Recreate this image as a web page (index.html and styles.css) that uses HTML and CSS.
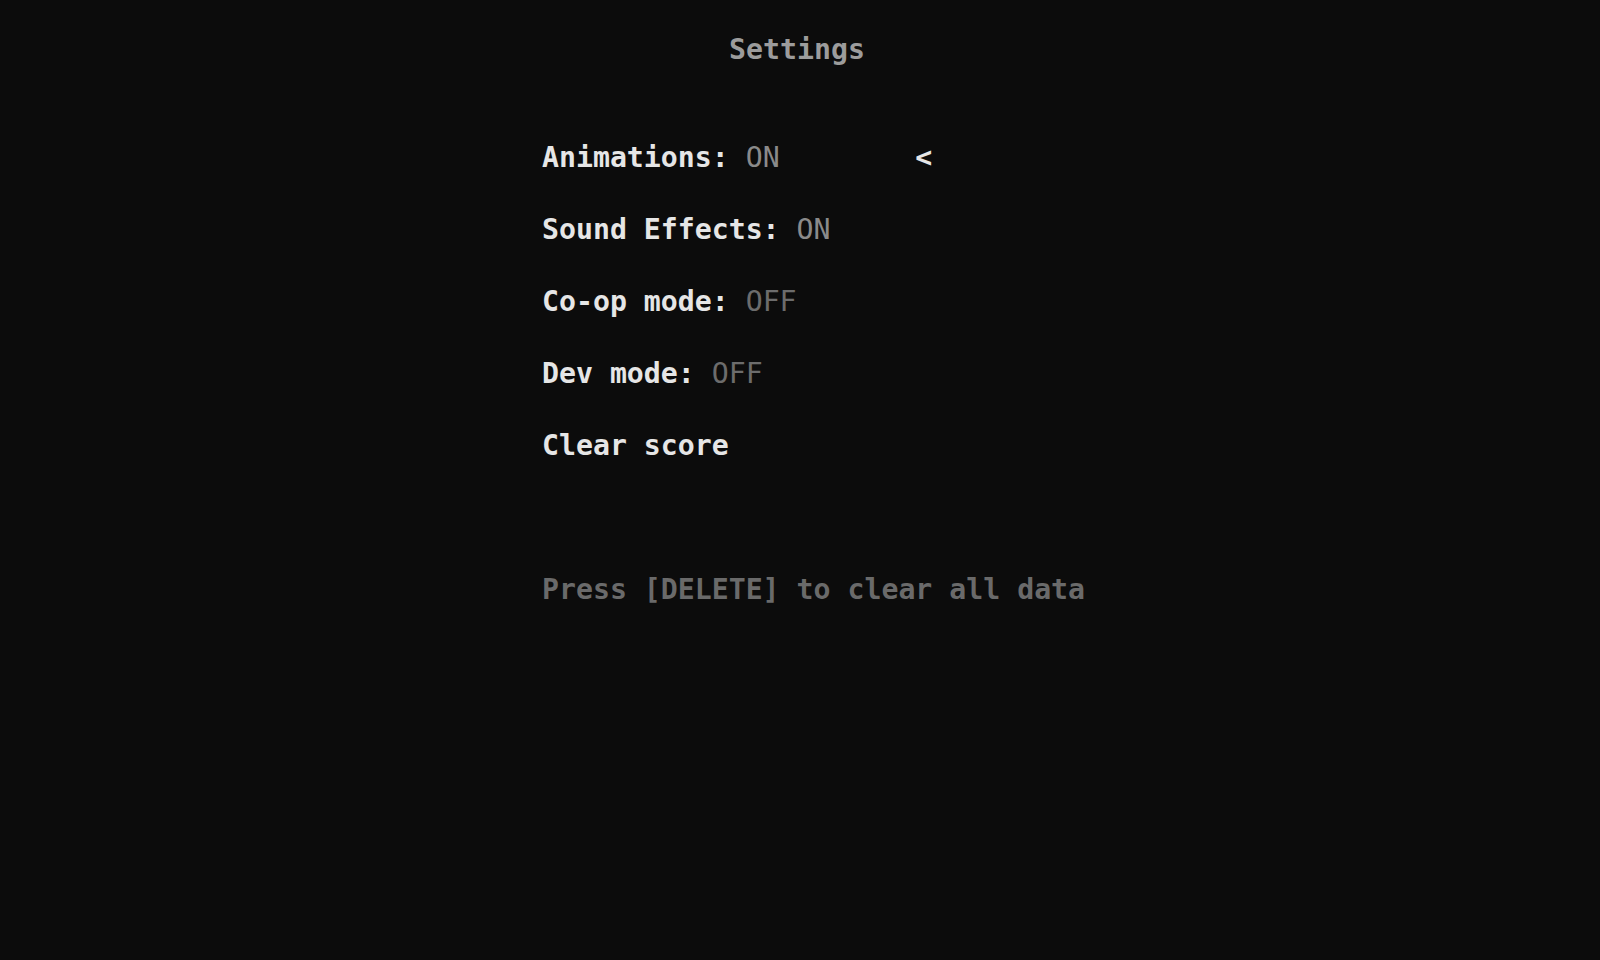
FILE: index.html
```html
<!DOCTYPE html>
<html lang="en">
  <head>
    <meta charset="UTF-8" />
    <meta name="viewport" content="width=device-width, initial-scale=1.0" />
    <title>Settings</title>
    <link rel="stylesheet" href="styles.css">
  </head>
  <body>
    <h1 class="title">Settings</h1>

    <div class="menu">
      <ul class="options">
        <li class="option selected">
          <span class="option-text">Animations: <span class="value on">ON</span></span>
          <span class="cursor">&lt;</span>
        </li>
        <li class="option">
          <span class="option-text">Sound Effects: <span class="value on">ON</span></span>
        </li>
        <li class="option">
          <span class="option-text">Co-op mode: <span class="value off">OFF</span></span>
        </li>
        <li class="option">
          <span class="option-text">Dev mode: <span class="value off">OFF</span></span>
        </li>
        <li class="option">
          <span class="option-text">Clear score</span>
        </li>
      </ul>

      <p class="hint">Press [DELETE] to clear all data</p>
    </div>
  </body>
</html>
```

FILE: styles.css
```css
:root {
  --background: #0c0c0c;
  --text: #e6e6e6;
  --muted: #9c9c9c;
  --value-on: #8a8a8a;
  --value-off: #6c6c6c;
  --hint: #6a6a6a;
  --row-height: 72px;
}

* {
  margin: 0;
  padding: 0;
  box-sizing: border-box;
}

body {
  font-family: 'DejaVu Sans Mono', 'Liberation Mono', monospace;
  font-size: 28.2px;
  background-color: var(--background);
  color: var(--text);
  min-height: 100vh;
}

.title {
  font-size: 28.2px;
  font-weight: 700;
  color: var(--muted);
  text-align: center;
  line-height: var(--row-height);
  padding-top: 14px;
  padding-right: 6px;
  margin-bottom: 36px;
}

.menu {
  width: 518px;
  margin: 0 auto;
  padding-left: 1px;
}

.options {
  list-style: none;
}

.option {
  display: flex;
  align-items: center;
  line-height: var(--row-height);
  font-weight: 700;
  white-space: pre;
}

.option-text {
  width: 22ch;
}

.value {
  font-weight: 400;
}

.value.on {
  color: var(--value-on);
}

.value.off {
  color: var(--value-off);
}

.cursor {
  color: var(--text);
}

.hint {
  margin-top: var(--row-height);
  line-height: var(--row-height);
  font-weight: 700;
  color: var(--hint);
  white-space: nowrap;
}
```
